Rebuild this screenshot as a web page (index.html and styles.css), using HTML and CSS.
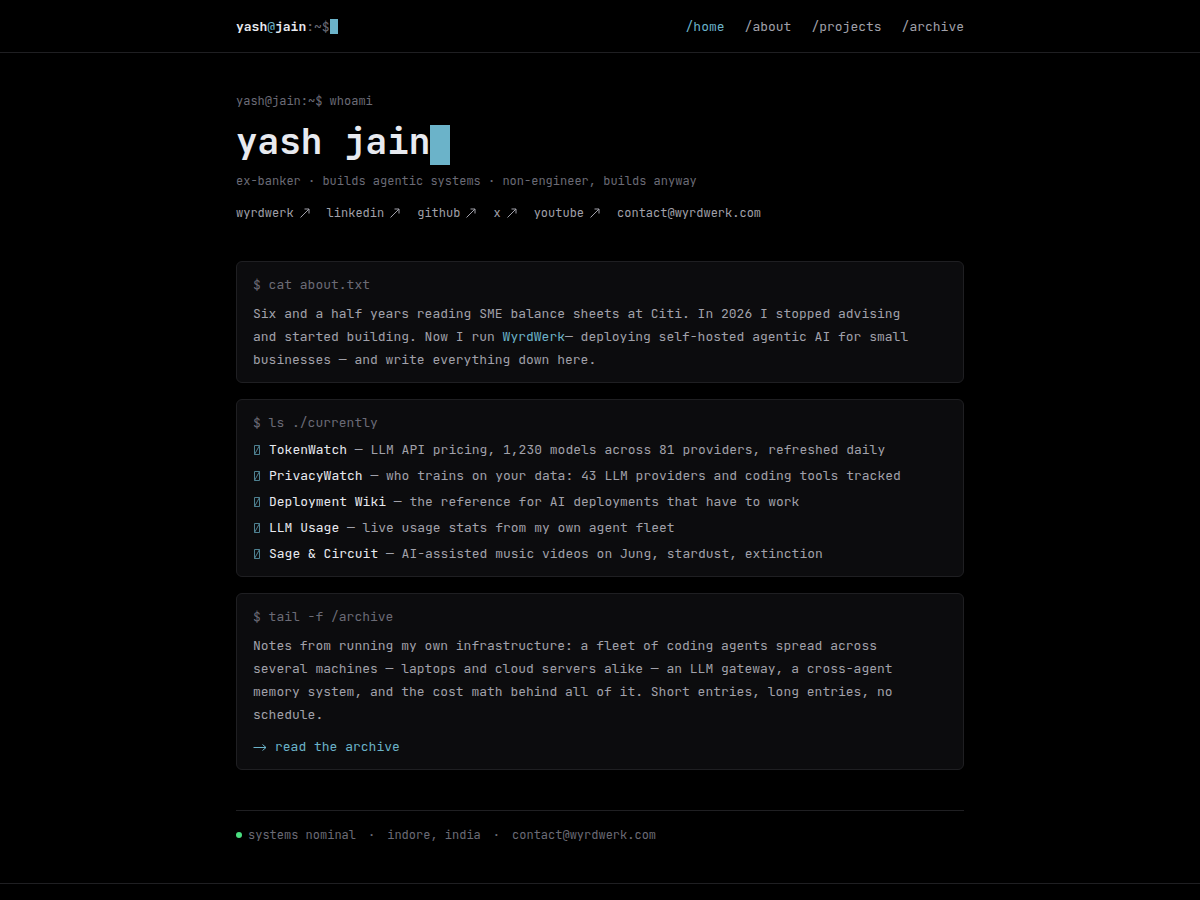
FILE: index.html
```html
<!DOCTYPE html>
<html lang="en">
<head>
  <meta charset="UTF-8">
  <meta name="viewport" content="width=device-width, initial-scale=1.0">
  <title>yash jain</title>
  <link rel="stylesheet" href="styles.css">
</head>
<body>
  <svg class="defs" aria-hidden="true">
    <symbol id="out" viewBox="0 0 12 12"><path d="M1.5 10.5 L10 2 M5.5 2 H10 V6.5" /></symbol>
    <symbol id="arrow" viewBox="0 0 14 12"><path d="M0.5 6.5 H13 M9.5 3.5 L13 6.5 L9.5 9.5" /></symbol>
    <symbol id="marker" viewBox="0 0 8 12"><path d="M1.5 1.5 H6.5 V10.5 H1.5 Z M1.5 10.5 L6.5 1.5" /></symbol>
  </svg>

  <header class="site-header">
    <div class="wrap bar">
      <a class="logo" href="/"><b>yash</b><span class="at">@</span><b>jain</b><span class="path">:~$</span><span class="cursor"></span></a>
      <nav class="nav">
        <a class="active" href="/">/home</a>
        <a href="/about">/about</a>
        <a href="/projects">/projects</a>
        <a href="/archive">/archive</a>
      </nav>
    </div>
  </header>

  <main class="wrap main">
    <section class="hero">
      <p class="prompt">yash@jain:~$ whoami</p>
      <h1>yash jain<span class="cursor cursor-lg"></span></h1>
      <p class="tagline">ex-banker · builds agentic systems · non-engineer, builds anyway</p>
      <div class="links">
        <a href="#">wyrdwerk <svg class="out"><use href="#out" /></svg></a>
        <a href="#">linkedin <svg class="out"><use href="#out" /></svg></a>
        <a href="#">github <svg class="out"><use href="#out" /></svg></a>
        <a href="#">x <svg class="out"><use href="#out" /></svg></a>
        <a href="#">youtube <svg class="out"><use href="#out" /></svg></a>
        <a href="mailto:contact@wyrdwerk.com">contact@wyrdwerk.com</a>
      </div>
    </section>

    <div class="cards">
      <section class="card">
        <h2>$ cat about.txt</h2>
        <p>Six and a half years reading SME balance sheets at Citi. In 2026 I stopped advising and started building. Now I run <a href="#">WyrdWerk</a>— deploying self-hosted agentic AI for small businesses — and write everything down here.</p>
      </section>

      <section class="card">
        <h2>$ ls ./currently</h2>
        <ul class="list">
          <li><svg class="marker"><use href="#marker" /></svg><span><a href="#">TokenWatch</a> — LLM API pricing, 1,230 models across 81 providers, refreshed daily</span></li>
          <li><svg class="marker"><use href="#marker" /></svg><span><a href="#">PrivacyWatch</a> — who trains on your data: 43 LLM providers and coding tools tracked</span></li>
          <li><svg class="marker"><use href="#marker" /></svg><span><a href="#">Deployment Wiki</a> — the reference for AI deployments that have to work</span></li>
          <li><svg class="marker"><use href="#marker" /></svg><span><a href="#">LLM Usage</a> — live usage stats from my own agent fleet</span></li>
          <li><svg class="marker"><use href="#marker" /></svg><span><a href="#">Sage &amp; Circuit</a> — AI-assisted music videos on Jung, stardust, extinction</span></li>
        </ul>
      </section>

      <section class="card">
        <h2>$ tail -f /archive</h2>
        <p>Notes from running my own infrastructure: a fleet of coding agents spread across several machines — laptops and cloud servers alike — an LLM gateway, a cross-agent memory system, and the cost math behind all of it. Short entries, long entries, no schedule.</p>
        <a class="more" href="/archive"><svg class="arrow"><use href="#arrow" /></svg>read the archive</a>
      </section>
    </div>

    <div class="status">
      <span class="state"><i class="dot"></i>systems nominal</span>
      <span>·</span>
      <span>indore, india</span>
      <span>·</span>
      <a href="mailto:contact@wyrdwerk.com">contact@wyrdwerk.com</a>
    </div>
  </main>

  <footer class="site-footer"></footer>
</body>
</html>
```
FILE: styles.css
```css
:root {
  --bg: #000000;
  --card-bg: #0c0c0e;
  --border: #1f1f22;
  --text: #a1a1aa;
  --dim: #6b6b76;
  --bright: #e8eaf0;
  --accent: #6bb3c9;
  --green: #4ade80;
}
* { box-sizing: border-box; margin: 0; padding: 0; }
body {
  font-family: 'JetBrains Mono', 'DejaVu Sans Mono', monospace;
  font-size: 13px;
  line-height: 23px;
  background: var(--bg);
  color: var(--text);
  min-height: 100vh;
}
a { color: inherit; text-decoration: none; }
svg { fill: none; stroke: currentColor; }
.defs { display: none; }
.wrap {
  max-width: 760px;
  margin: 0 auto;
  padding: 0 16px;
}
.site-header { border-bottom: 1px solid var(--border); }
.bar {
  display: flex;
  justify-content: space-between;
  align-items: center;
  min-height: 52px;
}
.logo {
  display: flex;
  align-items: center;
  color: var(--dim);
}
.logo b { font-weight: 600; color: var(--bright); }
.logo .at { color: var(--accent); }
.cursor {
  width: 8px;
  height: 15px;
  background: var(--accent);
}
.nav { display: flex; gap: 20px; }
.nav .active { color: var(--accent); }

.main { padding-top: 40px; padding-bottom: 40px; }
.prompt, .tagline, .links, .status { font-size: 12px; line-height: 16px; }
.prompt, .tagline { color: var(--dim); }
h1 {
  display: flex;
  align-items: flex-end;
  margin: 8px 0;
  font-size: 36px;
  font-weight: 600;
  line-height: 48px;
  color: var(--bright);
}
.cursor-lg { width: 20px; height: 40px; }
.links {
  display: flex;
  flex-wrap: wrap;
  gap: 16px;
  margin-top: 16px;
}
.links a { display: flex; align-items: center; gap: 5px; }
.out { width: 12px; height: 12px; }

.cards {
  display: flex;
  flex-direction: column;
  gap: 16px;
  margin-top: 40px;
}
.card {
  padding: 11px 16px;
  background: var(--card-bg);
  border: 1px solid var(--border);
  border-radius: 6px;
}
.card h2 {
  font-size: 13px;
  font-weight: 400;
  color: var(--dim);
}
.card p { max-width: 672px; margin-top: 6px; }
.card p a, .more { color: var(--accent); }
.list {
  display: flex;
  flex-direction: column;
  gap: 4px;
  margin-top: 5px;
  list-style: none;
  line-height: 22px;
}
.list li { display: flex; align-items: center; gap: 8px; }
.list a { color: var(--bright); }
.marker {
  flex: none;
  width: 8px;
  height: 12px;
  color: var(--accent);
  opacity: 0.7;
}
.more {
  display: flex;
  align-items: center;
  gap: 8px;
  margin-top: 10px;
  line-height: 22px;
}
.arrow { width: 14px; height: 12px; }

.status {
  display: flex;
  flex-wrap: wrap;
  gap: 12px;
  margin-top: 40px;
  padding-top: 16px;
  border-top: 1px solid var(--border);
  color: var(--dim);
}
.state { display: flex; align-items: center; gap: 6px; }
.dot {
  width: 6px;
  height: 6px;
  border-radius: 50%;
  background: var(--green);
}
.site-footer { border-top: 1px solid var(--border); }
```
